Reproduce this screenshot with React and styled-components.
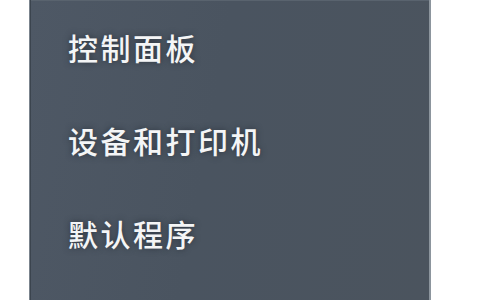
import React from 'react';
import styled, { createGlobalStyle } from 'styled-components';

const GlobalStyle = createGlobalStyle`
  html, body {
    margin: 0;
    padding: 0;
    background: #ffffff;
  }
`;

const Page = styled.div`
  display: flex;
  width: 480px;
  height: 300px;
  overflow: hidden;
`;

const Panel = styled.nav`
  margin-left: 29px;
  width: 399px;
  height: 300px;
  display: flex;
  flex-direction: column;
  background: linear-gradient(100deg, #4e5865 0%, #4a5460 45%, #4b545e 100%);
  border-left: 1px solid #7b848d;
  border-right: 2px solid #8c959d;
  box-shadow: inset 1px 0 0 #3b444e, inset 0 1px 0 #59636e;
`;

const Item = styled.a`
  height: 93px;
  display: flex;
  align-items: center;
  padding-left: 38px;
  font-family: "Noto Sans CJK SC", "Noto Sans", sans-serif;
  font-size: 30px;
  font-weight: 500;
  letter-spacing: 2.5px;
  color: #f4f5f6;
  text-decoration: none;
  text-shadow: 0 0 6px rgba(40, 48, 58, 0.9);
`;

const items = ['控制面板', '设备和打印机', '默认程序'];

export default function App() {
  return (
    <>
      <GlobalStyle />
      <Page>
        <Panel>
          {items.map((label) => (
            <Item key={label} href="#">
              {label}
            </Item>
          ))}
        </Panel>
      </Page>
    </>
  );
}
